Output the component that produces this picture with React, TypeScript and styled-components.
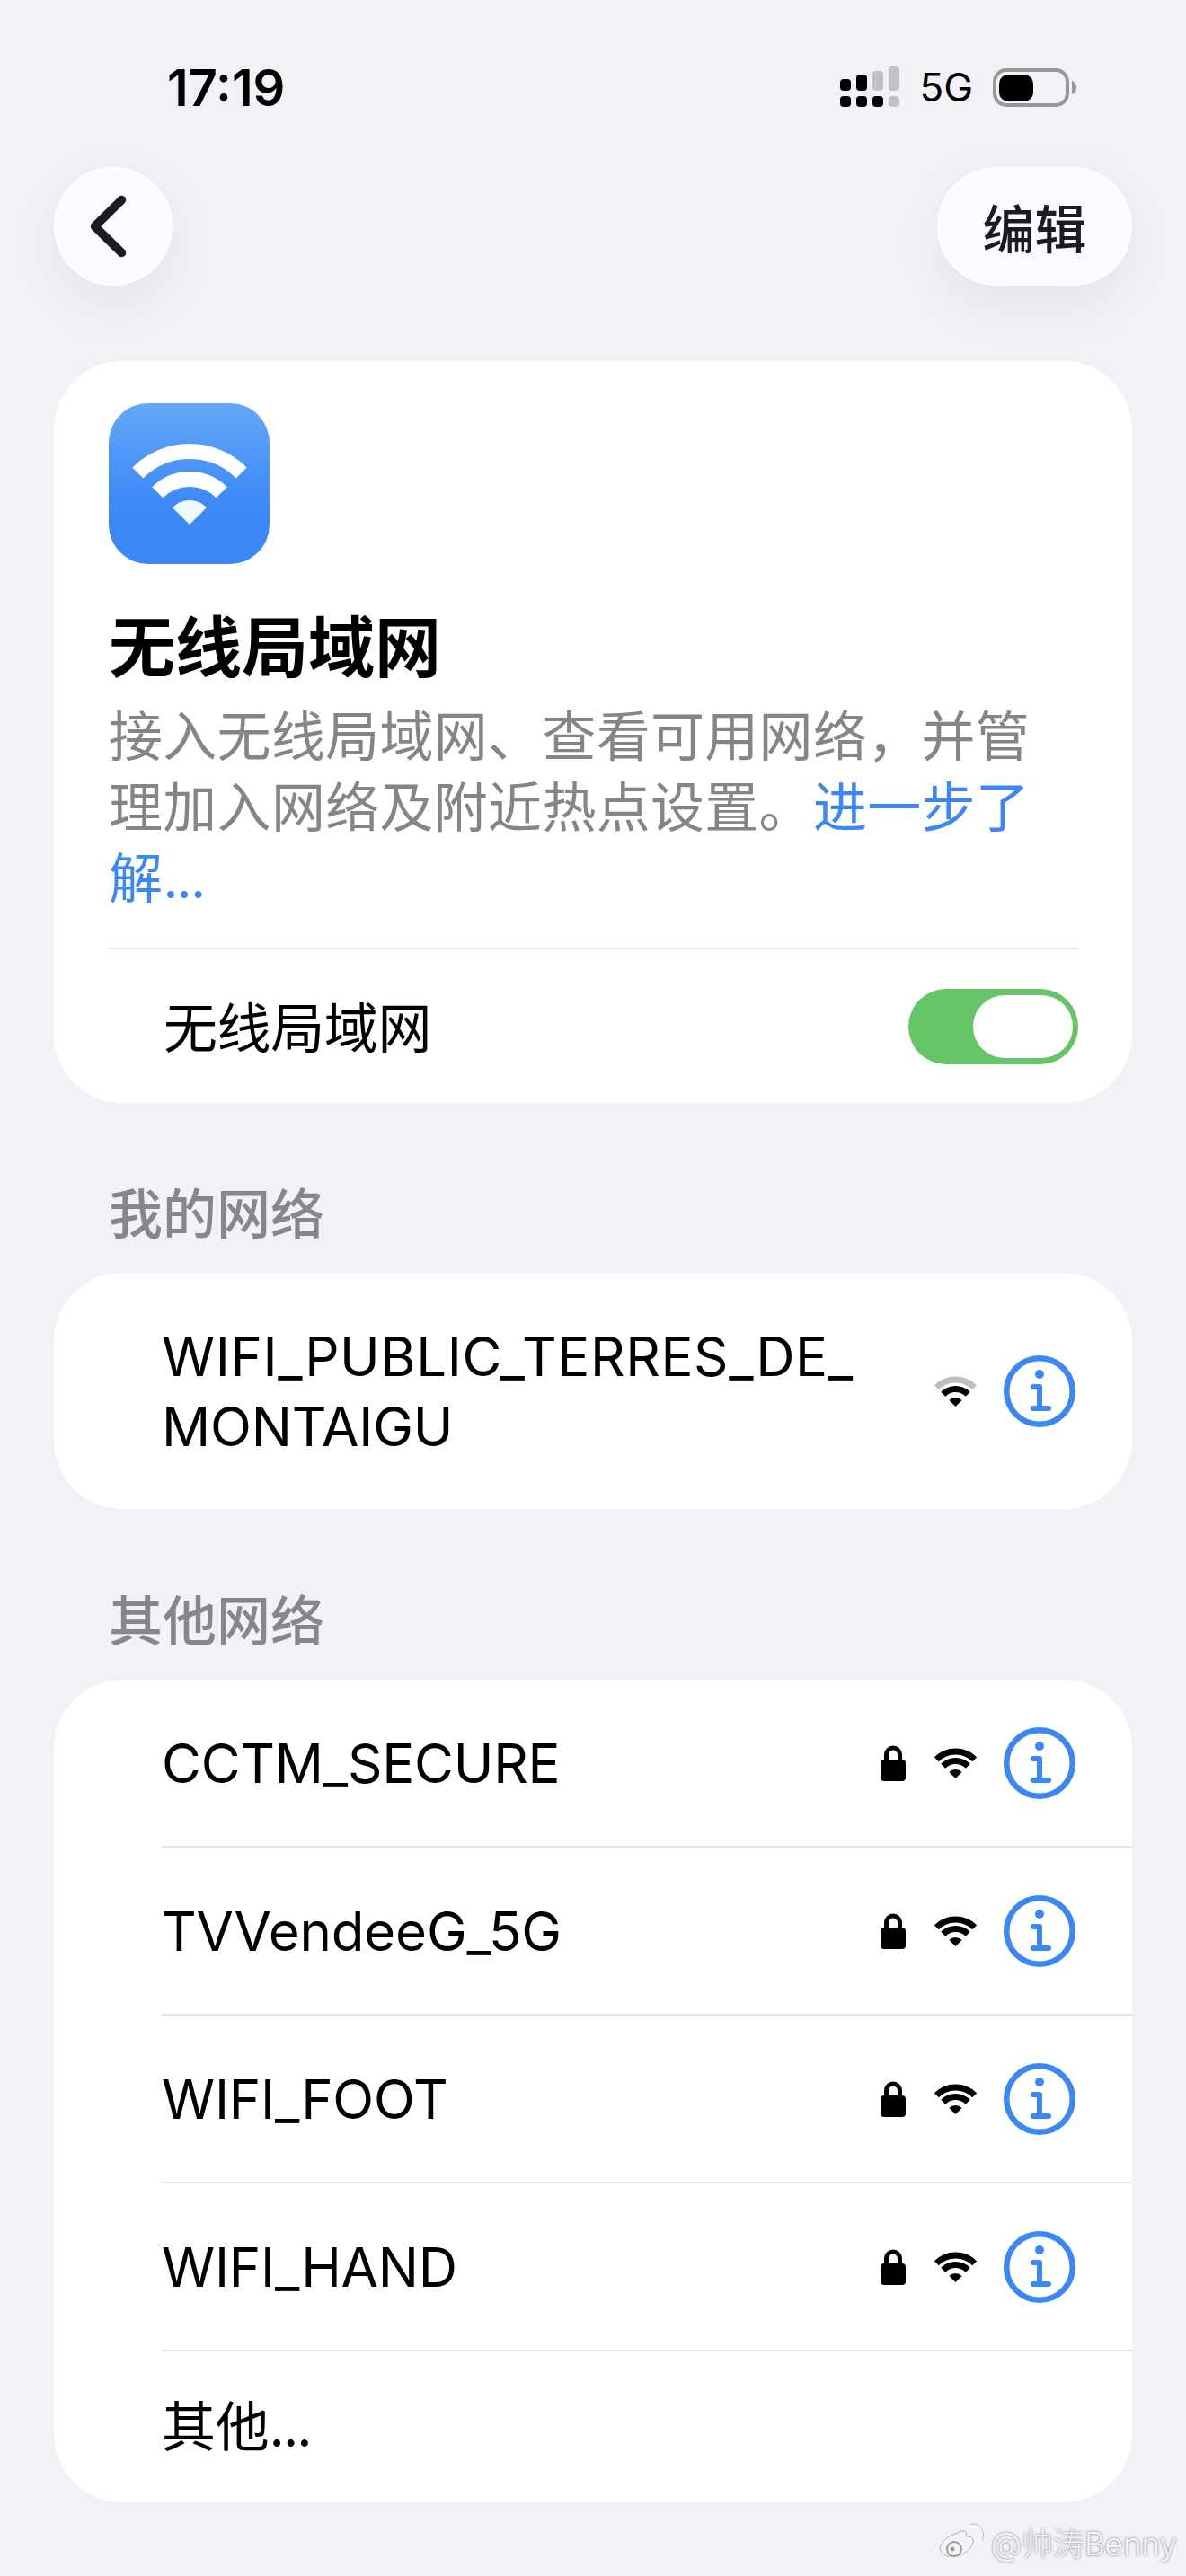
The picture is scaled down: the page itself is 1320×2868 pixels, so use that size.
import React from "react";
import styled, { createGlobalStyle } from "styled-components";

const Global = createGlobalStyle`
  html, body { margin: 0; padding: 0; background: #f1f1f6; }
  body { font-family: Inter, "Noto Sans CJK SC", sans-serif; -webkit-font-smoothing: antialiased; }
`;
const Page = styled.div`
  width: 1320px; height: 2868px; overflow: hidden; background: #f1f1f6; color: #000;
  display: flex; flex-direction: column; position: relative;
`;
const StatusBar = styled.div`
  height: 186px; box-sizing: border-box; padding: 71px 122px 0 186px;
  display: flex; justify-content: space-between; align-items: flex-start;
`;
const Time = styled.div`font-size: 56px; font-weight: 600; line-height: 54px;`;
const StatusRight = styled.div`display: flex; align-items: center; gap: 22px; height: 52px;`;
const FiveG = styled.span`font-size: 44px; line-height: 52px; font-weight: 400;`;
const NavBar = styled.div`height: 132px; padding: 0 60px; display: flex; justify-content: space-between;`;
const RoundButton = styled.div`
  height: 132px; min-width: 132px; box-sizing: border-box; border-radius: 66px; background: #fafaff;
  border: 3px solid #fdfdff;
  display: flex; align-items: center; justify-content: center;
  box-shadow: 0 20px 60px rgba(0,0,0,0.06);
`;
const EditButton = styled(RoundButton)`
  width: 217px; font-size: 58px; font-weight: 500; color: #1c1c1e;
`;
const Content = styled.div`padding: 84px 60px 0; display: flex; flex-direction: column;`;
const Card = styled.div`background: #fff; border-radius: 76px; overflow: hidden;`;
const IntroCard = styled(Card)`padding: 47px 60px 0 61px; height: 826px; box-sizing: border-box;`;
const AppIcon = styled.div`
  width: 179px; height: 179px; border-radius: 44px;
  background: linear-gradient(180deg, #64a8f8 0%, #3d89f7 62%, #3b87f6 100%);
  display: flex; align-items: center; justify-content: center;
`;
const Title = styled.div`margin-top: 48px; font-size: 74px; line-height: 90px; font-weight: 700;`;
const Desc = styled.div`margin-top: 15px; font-size: 60px; line-height: 79px; color: #858585; width: 1040px; letter-spacing: 0.3px;`;
const Link = styled.span`color: #3b87f6;`;
const Dots = styled.span`letter-spacing: -2px;`;
const Divider = styled.div`height: 2px; background: #e5e5e7; margin-top: 37px;`;
const ToggleRow = styled.div`
  height: 170px; box-sizing: border-box; padding: 2px 0 0 61px;
  display: flex; align-items: center; justify-content: space-between; font-size: 60px;
`;
const ToggleLabel = styled.span`margin-bottom: 5px; letter-spacing: -0.4px;`;
const Toggle = styled.div`
  width: 189px; height: 84px; border-radius: 42px; background: #66c667; box-sizing: border-box;
  padding: 7px 6px; display: flex; justify-content: flex-end;
`;
const Thumb = styled.div`width: 111px; height: 70px; border-radius: 35px; background: #fff;`;
const SectionLabel = styled.div<{ $top: number }>`
  margin-left: 61px; font-size: 60px; font-weight: 500; color: #86868b; line-height: 80px;
  margin-top: ${(p) => p.$top}px; margin-bottom: 25px;
`;
const Row = styled.div<{ $h: number; $line?: boolean }>`
  height: ${(p) => p.$h}px; box-sizing: border-box; margin-left: 120px; padding-right: 63px;
  display: flex; align-items: center; font-size: 60px; line-height: 78px; letter-spacing: -0.2px;
  border-bottom: ${(p) => (p.$line ? "2px solid #e5e5e7" : "none")};
`;
const Name = styled.div`flex: 1; min-width: 0; word-break: break-all;`;
const LongLine = styled.span`letter-spacing: 0.6px;`;
const Icons = styled.div`display: flex; align-items: center; flex: none;`;
const LockSlot = styled.div`width: 28px; display: flex; margin-right: 32px;`;
const WifiSlot = styled.div`width: 47px; display: flex; margin-right: 30px;`;
const Watermark = styled.div`
  position: absolute; right: 10px; bottom: 13px; display: flex; align-items: center; gap: 7px;
  font-size: 35px; font-weight: 300; color: #f4f4f6; text-shadow: 0 0 3px rgba(0,0,0,.5);
`;

const Wifi = ({ dim }: { dim?: boolean }) => (
  <svg width="47" height="34" viewBox="0 0 47 34">
    <path d="M2.3 12.8 A30 30 0 0 1 44.7 12.8" fill="none" stroke={dim ? "#bfbfbf" : "#000"} strokeWidth="7" />
    <path d="M9.7 20.2 A19.5 19.5 0 0 1 37.3 20.2" fill="none" stroke="#000" strokeWidth="7" />
    <path d="M23.5 34 L16.4 26.9 A10 10 0 0 1 30.6 26.9 Z" fill="#000" />
  </svg>
);
const Lock = () => (
  <svg width="28" height="40" viewBox="0 0 28 40">
    <path d="M6.5 18 V10.5 a7.5 7.5 0 0 1 15 0 V18" fill="none" stroke="#000" strokeWidth="5" />
    <rect x="0" y="16" width="28" height="24" rx="4" fill="#000" />
  </svg>
);
const Info = () => (
  <svg width="80" height="80" viewBox="0 0 80 80">
    <circle cx="40" cy="40" r="36.75" fill="none" stroke="#3b87f6" strokeWidth="6.5" />
    <circle cx="40" cy="21" r="5" fill="#3b87f6" />
    <path d="M33 35 H40 V59 M33 59 H50" fill="none" stroke="#3b87f6" strokeWidth="6" strokeLinecap="round" strokeLinejoin="round" />
  </svg>
);
const Signal = () => (
  <svg width="66" height="46" viewBox="0 0 66 46">
    {[[0, 14, "#000"], [18, 9, "#000"], [36, 5, "#c1c1c6"], [54, 0, "#c1c1c6"]].map(([x, y, c]) => (
      <rect key={String(x)} x={x as number} y={y as number} width="12" height={27 - (y as number)} rx="4" fill={c as string} />
    ))}
    {[0, 18, 36, 54].map((x, i) => (
      <rect key={x} x={x} y="33" width="12" height="12" rx="4" fill={i === 3 ? "#c1c1c6" : "#000"} />
    ))}
  </svg>
);
const Battery = () => (
  <svg width="93" height="43" viewBox="0 0 93 43">
    <rect x="2" y="2" width="81" height="39" rx="13" fill="none" stroke="#98989b" strokeWidth="4" />
    <rect x="7" y="7" width="38" height="30" rx="10" fill="#000" />
    <path d="M88 14 C91 15 93 18 93 21.5 C93 25 91 28 88 29 Z" fill="#98989b" />
  </svg>
);
const WeiboMark = () => (
  <svg width="52" height="42" viewBox="0 0 52 42">
    <path d="M20 12 C28 7 33 8 31 15 C38 14 42 19 37 26 C31 36 14 41 5 34 C-3 27 8 15 20 12 Z" fill="#f4f4f6" stroke="#b0b0b0" strokeWidth="1" />
    <circle cx="18" cy="29" r="8" fill="#f4f4f6" stroke="#9c9c9c" strokeWidth="2" />
    <circle cx="16" cy="29" r="2.5" fill="#9c9c9c" />
    <path d="M36 10 C41 9 44 13 42 19" fill="none" stroke="#f4f4f6" strokeWidth="3" />
    <path d="M36 3 C45 1 51 9 48 19" fill="none" stroke="#f4f4f6" strokeWidth="3" />
    <path d="M36 1.5 C46 -1 53 8 49.5 19.5" fill="none" stroke="#b8b8b8" strokeWidth="1" />
  </svg>
);

const NetworkRow = ({ name }: { name: string }) => (
  <Row $h={187} $line>
    <Name>{name}</Name>
    <Icons>
      <LockSlot><Lock /></LockSlot>
      <WifiSlot><Wifi /></WifiSlot>
      <Info />
    </Icons>
  </Row>
);

export default function App() {
  return (
    <Page>
      <Global />
      <StatusBar>
        <Time>17:19</Time>
        <StatusRight>
          <Signal />
          <FiveG>5G</FiveG>
          <Battery />
        </StatusRight>
      </StatusBar>
      <NavBar>
        <RoundButton>
          <svg width="70" height="76" viewBox="0 0 70 76">
            <path d="M44.5 8.5 L14.5 38 L44.5 67.5" fill="none" stroke="#1c1c1e" strokeWidth="9.5" strokeLinecap="round" strokeLinejoin="round" />
          </svg>
        </RoundButton>
        <EditButton>编辑</EditButton>
      </NavBar>
      <Content>
        <IntroCard>
          <AppIcon>
            <svg width="128" height="92" viewBox="0 0 128 92">
              <path d="M6.4 33.4 A81.5 81.5 0 0 1 121.6 33.4" fill="none" stroke="#fff" strokeWidth="17" />
              <path d="M28.3 55.3 A50.5 50.5 0 0 1 99.7 55.3" fill="none" stroke="#fff" strokeWidth="17" />
              <path d="M64 91 L44.9 71.9 A27 27 0 0 1 83.1 71.9 Z" fill="#f0f8ff" />
            </svg>
          </AppIcon>
          <Title>无线局域网</Title>
          <Desc>接入无线局域网、查看可用网络，并管理加入网络及附近热点设置。<Link>进一步了解<Dots>...</Dots></Link></Desc>
          <Divider />
          <ToggleRow>
            <ToggleLabel>无线局域网</ToggleLabel>
            <Toggle><Thumb /></Toggle>
          </ToggleRow>
        </IntroCard>
        <SectionLabel $top={84}>我的网络</SectionLabel>
        <Card>
          <Row $h={263}>
            <Name><LongLine>WIFI_PUBLIC_TERRES_DE_</LongLine><br />MONTAIGU</Name>
            <Icons>
              <WifiSlot><Wifi dim /></WifiSlot>
              <Info />
            </Icons>
          </Row>
        </Card>
        <SectionLabel $top={85}>其他网络</SectionLabel>
        <Card>
          <NetworkRow name="CCTM_SECURE" />
          <NetworkRow name="TVVendeeG_5G" />
          <NetworkRow name="WIFI_FOOT" />
          <NetworkRow name="WIFI_HAND" />
          <Row $h={168}><Name>其他<Dots>...</Dots></Name></Row>
        </Card>
      </Content>
      <Watermark><WeiboMark />@帅涛Benny</Watermark>
    </Page>
  );
}
